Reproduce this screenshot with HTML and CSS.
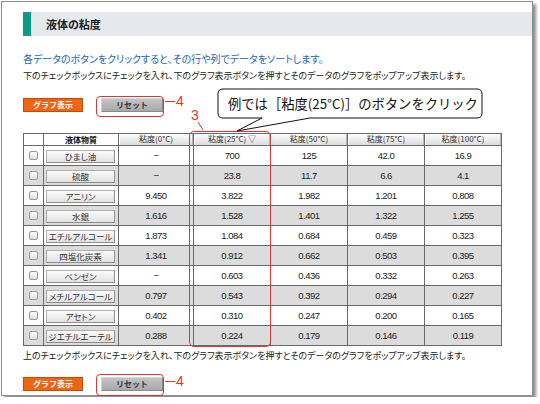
FILE: index.html
```html
<!DOCTYPE html>
<html lang="ja">
<head>
  <meta charset="UTF-8" />
  <title>液体の粘度</title>
  <link rel="stylesheet" href="styles.css">
</head>
<body>
  <div class="frame">
    <h2 class="section-title">液体の粘度</h2>
    <p class="lead">各データのボタンをクリックすると、その行や列でデータをソートします。</p>
    <p class="note">下のチェックボックスにチェックを入れ、下のグラフ表示ボタンを押すとそのデータのグラフをポップアップ表示します。</p>

    <div class="btn-row">
      <button class="btn btn-graph">グラフ表示</button>
      <button class="btn btn-reset">リセット</button>
    </div>

    <table class="visc-table">
      <colgroup>
        <col class="c-check"><col class="c-name"><col class="c-d0">
        <col class="c-d"><col class="c-d"><col class="c-d"><col class="c-d">
      </colgroup>
      <thead>
        <tr>
          <th class="th-blank"></th>
          <th class="th-name">液体物質</th>
          <th><span class="th-btn">粘度(0°C)</span></th>
          <th><span class="th-btn">粘度(25°C) ▽</span></th>
          <th><span class="th-btn">粘度(50°C)</span></th>
          <th><span class="th-btn">粘度(75°C)</span></th>
          <th><span class="th-btn">粘度(100°C)</span></th>
        </tr>
      </thead>
      <tbody id="rows"></tbody>
    </table>

    <p class="note after">上のチェックボックスにチェックを入れ、下のグラフ表示ボタンを押すとそのデータのグラフをポップアップ表示します。</p>

    <div class="btn-row bottom">
      <button class="btn btn-graph">グラフ表示</button>
      <button class="btn btn-reset">リセット</button>
    </div>

    <!-- 注釈 -->
    <div class="mark-box top"></div>
    <div class="mark-num top"><span class="leader"></span>4</div>
    <div class="mark-box bottom"></div>
    <div class="mark-num bottom"><span class="leader"></span>4</div>
    <div class="mark-col"></div>
    <div class="mark-three">3</div>
    <svg class="mark-lines" width="530" height="393">
      <line x1="196" y1="120" x2="201" y2="128" stroke="#e03030" stroke-width="1" />
      <path d="M221 87 H475 Q480 87 480 92 V111 Q480 116 475 116 H308 L235 129 L260 116 H221 Q216 116 216 111 V92 Q216 87 221 87 Z"
            fill="#fff" stroke="#111" stroke-width="1" />
    </svg>
    <div class="bubble-text">例では［粘度(25°C)］のボタンをクリック</div>
  </div>

  <script>
    const data = [
      ["ひまし油", "−", "700", "125", "42.0", "16.9"],
      ["硫酸", "−", "23.8", "11.7", "6.6", "4.1"],
      ["アニリン", "9.450", "3.822", "1.982", "1.201", "0.808"],
      ["水銀", "1.616", "1.528", "1.401", "1.322", "1.255"],
      ["エチルアルコール", "1.873", "1.084", "0.684", "0.459", "0.323"],
      ["四塩化炭素", "1.341", "0.912", "0.662", "0.503", "0.395"],
      ["ベンゼン", "−", "0.603", "0.436", "0.332", "0.263"],
      ["メチルアルコール", "0.797", "0.543", "0.392", "0.294", "0.227"],
      ["アセトン", "0.402", "0.310", "0.247", "0.200", "0.165"],
      ["ジエチルエーテル", "0.288", "0.224", "0.179", "0.146", "0.119"]
    ];

    const tbody = document.getElementById("rows");
    data.forEach(row => {
      const tr = document.createElement("tr");
      tr.innerHTML = `
        <td class="td-check"><span class="chk"></span></td>
        <td class="td-name"><span class="name-btn">${row[0]}</span></td>
        ${row.slice(1).map(v => `<td class="td-num">${v}</td>`).join("")}
      `;
      tbody.appendChild(tr);
    });
  </script>
</body>
</html>
```

FILE: styles.css
```css
html, body {
  margin: 0;
  padding: 0;
  background: #fff;
  font-family: "Noto Sans CJK JP", "Liberation Sans", sans-serif;
  color: #222;
}

body {
  padding: 1px;
}

.frame {
  position: relative;
  box-sizing: border-box;
  width: 532px;
  height: 395px;
  border: 1px solid #8e8e8e;
  box-shadow: 3px 3px 3px rgba(0, 0, 0, 0.45);
  padding: 10px 0 0 21px;
  font-feature-settings: "palt" 1;
}

.section-title {
  margin: 0;
  height: 24px;
  line-height: 24px;
  padding-left: 15px;
  background: #e5e9ed;
  border-left: 8px solid #0b9a85;
  font-size: 11px;
  font-weight: bold;
  color: #222;
}

.lead, .note {
  margin: 0;
  font-size: 9px;
  line-height: 17px;
  white-space: nowrap;
}

.lead {
  margin-top: 14px;
  font-size: 10px;
  color: #2468b4;
}

.note.after {
  margin-top: 1px;
}

.btn-row {
  display: flex;
  gap: 18px;
  margin-top: 14px;
}

.btn-row.bottom {
  margin-top: 13px;
}

.btn {
  box-sizing: border-box;
  height: 14px;
  padding: 0;
  font-family: inherit;
  font-size: 8px;
  font-weight: bold;
  line-height: 12px;
}

.btn-graph {
  width: 60px;
  background: #f06514;
  border: 1px solid #c84a00;
  color: #fff;
}

.btn-reset {
  width: 62px;
  background: linear-gradient(#c4c4c4, #a9a9a9);
  border: 1px solid #8a8a8a;
  border-top-color: #d8d8d8;
  border-left-color: #d0d0d0;
  color: #333;
}

/* 表 */
.visc-table {
  margin-top: 21px;
  border-collapse: collapse;
  table-layout: fixed;
  width: 477px;
}

.c-check { width: 20px; }
.c-name { width: 75px; }
.c-d0 { width: 75px; }
.c-d { width: 77px; }

.visc-table th, .visc-table td {
  border: 1px solid #6a6a6a;
  padding: 0;
  text-align: center;
}

.visc-table thead tr {
  height: 12px;
}

.visc-table th {
  height: 11px;
  font-size: 8px;
  font-weight: normal;
  line-height: 10px;
  color: #333;
  background: #fff;
}

.visc-table .th-name {
  font-weight: bold;
  color: #111;
}

.th-btn {
  display: block;
  height: 11px;
  background: linear-gradient(#fdfdfd, #dcdcdc);
  border-left: 1px solid #fff;
  border-right: 1px solid #b8b8b8;
}

.visc-table tbody tr {
  height: 20px;
}

.visc-table tbody tr:nth-child(even) {
  background: #dcdcdc;
}

.td-num {
  font-family: "Liberation Sans", sans-serif;
  font-size: 9.5px;
  letter-spacing: -0.5px;
  color: #222;
}

.td-check {
  text-align: left;
  vertical-align: top;
}

.chk {
  display: block;
  box-sizing: border-box;
  width: 9px;
  height: 9px;
  margin: 5px 0 0 5px;
  border: 1px solid #9a9a9a;
  border-radius: 2px;
  background: linear-gradient(#fff, #dedede);
}

.td-name {
  text-align: left;
  vertical-align: top;
}

.name-btn {
  display: block;
  box-sizing: border-box;
  width: 69px;
  height: 13px;
  margin: 4px 0 0 2px;
  border: 1px solid #b0b0b0;
  border-right-color: #8c8c8c;
  border-bottom-color: #8c8c8c;
  background: linear-gradient(#fbfbfb, #e2e2e2);
  font-size: 8.5px;
  line-height: 11px;
  text-align: center;
  color: #333;
}

/* 注釈 */
.mark-box {
  position: absolute;
  left: 94px;
  width: 68px;
  box-sizing: border-box;
  border: 1px solid #e23434;
  border-radius: 4px;
}

.mark-box.top { top: 94px; height: 21px; }
.mark-box.bottom { top: 372px; height: 22px; }

.mark-num {
  position: absolute;
  left: 163px;
  display: flex;
  align-items: center;
  font-family: "Liberation Sans", sans-serif;
  font-size: 14px;
  line-height: 14px;
  color: #e23434;
}

.mark-num.top { top: 92px; }
.mark-num.bottom { top: 372px; }

.leader {
  display: block;
  width: 10px;
  height: 1px;
  margin-right: 1px;
  background: #e23434;
}

.mark-col {
  position: absolute;
  left: 187px;
  top: 129px;
  width: 82px;
  height: 216px;
  box-sizing: border-box;
  border: 1px solid #e23434;
  border-radius: 5px;
}

.mark-three {
  position: absolute;
  left: 189px;
  top: 106px;
  font-family: "Liberation Sans", sans-serif;
  font-size: 14px;
  line-height: 14px;
  color: #e23434;
}

.mark-lines {
  position: absolute;
  left: 0;
  top: 0;
  pointer-events: none;
}

.bubble-text {
  position: absolute;
  left: 226px;
  top: 92px;
  font-size: 13.3px;
  line-height: 20px;
  font-feature-settings: normal;
  color: #111;
  white-space: nowrap;
}
```
